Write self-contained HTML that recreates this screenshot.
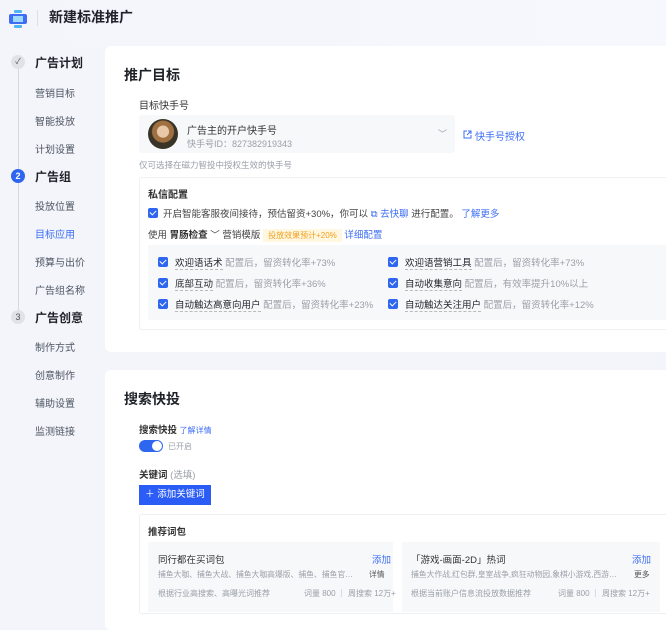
<!DOCTYPE html>
<html><head><meta charset="utf-8"><style>
*{margin:0;padding:0;box-sizing:border-box}
body{width:666px;height:606px;overflow:hidden;background:#f3f5fb;font-family:"Liberation Sans","Noto Sans CJK SC",sans-serif;color:#1f2329;position:relative}
.a{position:absolute;white-space:nowrap}
.g{color:#9aa0a8}
.b{color:#3d6ef5}
.cb{position:absolute;width:10px;height:10px;background:#2f66f0;border-radius:2px}
.cb:after{content:"";position:absolute;left:3px;top:1px;width:3px;height:5px;border:solid #fff;border-width:0 1.3px 1.3px 0;transform:rotate(45deg)}
.u{border-bottom:1px dashed #bbb}
.side{font-size:10px;color:#4e5561}
.st{font-size:12px;font-weight:bold;color:#1f2329}
.el{overflow:hidden;text-overflow:ellipsis}
</style></head><body>
<div class="a" style="left:0;top:0;width:666px;height:46px;background:linear-gradient(90deg,#f3f5fb,#f6f8fd);border-radius:12px 0 0 0"></div>
<svg class="a" style="left:7px;top:8px" width="22" height="22" viewBox="0 0 22 22"><rect x="7" y="2" width="8" height="3" rx="1" fill="#4fb6f5"/><rect x="2" y="6" width="18" height="10" rx="2" fill="#3d6ef5"/><rect x="6" y="8" width="10" height="6" fill="#9fd9fb"/><rect x="7" y="17" width="8" height="3" rx="1" fill="#4fb6f5"/></svg>
<div class="a" style="left:37px;top:10px;width:1px;height:16px;background:#dcdfe6"></div>
<div class="a" style="left:49px;top:7px;font-size:14px;font-weight:bold;color:#1f2329">新建标准推广</div>

<div class="a" style="left:18px;top:62px;width:1px;height:255px;background:#d5d9e0"></div>
<div class="a" style="left:11px;top:55px;width:14px;height:14px;border-radius:50%;background:#dfe2e8;font-size:8px;text-align:center;line-height:14px;color:#555">✓</div>
<div class="a st" style="left:35px;top:54px">广告计划</div>
<div class="a side" style="left:35px;top:85px">营销目标</div>
<div class="a side" style="left:35px;top:113px">智能投放</div>
<div class="a side" style="left:35px;top:141px">计划设置</div>
<div class="a" style="left:11px;top:169px;width:14px;height:14px;border-radius:50%;background:#2f66f0;font-size:9px;text-align:center;line-height:14px;color:#fff;font-weight:bold">2</div>
<div class="a st" style="left:35px;top:168px">广告组</div>
<div class="a side" style="left:35px;top:198px">投放位置</div>
<div class="a side" style="left:35px;top:226px;color:#3d6ef5">目标应用</div>
<div class="a side" style="left:35px;top:254px">预算与出价</div>
<div class="a side" style="left:35px;top:282px">广告组名称</div>
<div class="a" style="left:11px;top:310px;width:14px;height:14px;border-radius:50%;background:#dfe2e8;font-size:9px;text-align:center;line-height:14px;color:#555">3</div>
<div class="a st" style="left:35px;top:309px">广告创意</div>
<div class="a side" style="left:35px;top:339px">制作方式</div>
<div class="a side" style="left:35px;top:367px">创意制作</div>
<div class="a side" style="left:35px;top:395px">辅助设置</div>
<div class="a side" style="left:35px;top:423px">监测链接</div>

<div class="a" style="left:105px;top:46px;width:580px;height:306px;background:#fff;border-radius:6px"></div>
<div class="a" style="left:124px;top:65px;font-size:14px;font-weight:bold">推广目标</div>
<div class="a" style="left:139px;top:97px;font-size:10px;color:#333">目标快手号</div>
<div class="a" style="left:139px;top:115px;width:316px;height:38px;background:#f7f8fa;border-radius:3px"></div>
<div class="a" style="left:148px;top:119px;width:30px;height:30px;border-radius:50%;background:radial-gradient(circle at 50% 42%,#e8c8a8 0 25%,#a07040 28% 46%,#3a3428 50%)"></div>
<div class="a" style="left:187px;top:122px;font-size:10px;color:#333">广告主的开户快手号</div>
<div class="a g" style="left:187px;top:137px;font-size:9px">快手号ID：827382919343</div>
<div class="a g" style="left:438px;top:127px;font-size:9px">﹀</div>
<svg class="a" style="left:463px;top:130px" width="9" height="9" viewBox="0 0 9 9"><path d="M4 1H1v7h7V5M5 1h3v3M8 1L4 5" stroke="#3d6ef5" fill="none" stroke-width="1"/></svg>
<div class="a b" style="left:475px;top:128px;font-size:10px">快手号授权</div>
<div class="a g" style="left:139px;top:159px;font-size:8.5px">仅可选择在磁力智投中授权生效的快手号</div>

<div class="a" style="left:139px;top:177px;width:560px;height:153px;border:1px solid #eef0f3;border-radius:3px"></div>
<div class="a" style="left:148px;top:186px;font-size:10px;font-weight:bold;color:#333">私信配置</div>
<div class="cb" style="left:148px;top:208px"></div>
<div class="a" style="left:163px;top:206px;font-size:9.5px;color:#444">开启智能客服夜间接待，预估留资+30%，你可以 <span class="b">⧉ 去快聊</span> 进行配置。 <span class="b">了解更多</span></div>
<div class="a" style="left:148px;top:227px;font-size:9.5px;color:#444">使用 <b style="color:#333">胃肠检查</b> ﹀ 营销模版 <span style="background:#fff7e0;color:#f0a020;font-size:8px;padding:2px 5px">投放效果预计+20%</span> <span class="b">详细配置</span></div>
<div class="a" style="left:148px;top:245px;width:520px;height:75px;background:#f7f8fa"></div>
<div class="cb" style="left:158px;top:257px"></div><div class="a" style="left:175px;top:255px;font-size:9.5px"><span class="u">欢迎语话术</span> <span class="g">配置后，留资转化率+73%</span></div>
<div class="cb" style="left:158px;top:278px"></div><div class="a" style="left:175px;top:276px;font-size:9.5px"><span class="u">底部互动</span> <span class="g">配置后，留资转化率+36%</span></div>
<div class="cb" style="left:158px;top:299px"></div><div class="a" style="left:175px;top:297px;font-size:9.5px"><span class="u">自动触达高意向用户</span> <span class="g">配置后，留资转化率+23%</span></div>
<div class="cb" style="left:388px;top:257px"></div><div class="a" style="left:405px;top:255px;font-size:9.5px"><span class="u">欢迎语营销工具</span> <span class="g">配置后，留资转化率+73%</span></div>
<div class="cb" style="left:388px;top:278px"></div><div class="a" style="left:405px;top:276px;font-size:9.5px"><span class="u">自动收集意向</span> <span class="g">配置后，有效率提升10%以上</span></div>
<div class="cb" style="left:388px;top:299px"></div><div class="a" style="left:405px;top:297px;font-size:9.5px"><span class="u">自动触达关注用户</span> <span class="g">配置后，留资转化率+12%</span></div>

<div class="a" style="left:105px;top:370px;width:580px;height:260px;background:#fff;border-radius:6px"></div>
<div class="a" style="left:124px;top:389px;font-size:14px;font-weight:bold">搜索快投</div>
<div class="a" style="left:139px;top:422px;font-size:9.5px;font-weight:bold;color:#333">搜索快投 <span class="b" style="font-size:8px;font-weight:normal">了解详情</span></div>
<div class="a" style="left:139px;top:440px;width:24px;height:12px;border-radius:6px;background:#2f66f0"></div>
<div class="a" style="left:152px;top:441px;width:10px;height:10px;border-radius:50%;background:#fff"></div>
<div class="a g" style="left:168px;top:441px;font-size:8px">已开启</div>
<div class="a" style="left:139px;top:467px;font-size:9.5px;font-weight:bold;color:#333">关键词 <span class="g" style="font-weight:normal">(选填)</span></div>
<div class="a" style="left:139px;top:485px;width:72px;height:20px;background:#2b5cf6;color:#fff;font-size:9.5px;line-height:20px;text-align:center">＋ 添加关键词</div>
<div class="a" style="left:139px;top:514px;width:560px;height:100px;border:1px solid #eef0f3;border-radius:3px"></div>
<div class="a" style="left:148px;top:524px;font-size:9.5px;font-weight:bold;color:#333">推荐词包</div>
<div class="a" style="left:148px;top:542px;width:245px;height:70px;background:#f7f8fa"></div>
<div class="a" style="left:158px;top:552px;font-size:9.5px;color:#333">同行都在买词包</div>
<div class="a b" style="left:372px;top:552px;font-size:9.5px">添加</div>
<div class="a g el" style="left:158px;top:569px;width:200px;font-size:7.8px">捕鱼大咖、捕鱼大战、捕鱼大咖高爆版、捕鱼、捕鱼官方、快手小游戏</div>
<div class="a" style="left:369px;top:569px;font-size:7.8px;color:#555">详情</div>
<div class="a g" style="left:158px;top:588px;font-size:8px">根据行业高搜索、高曝光词推荐</div>
<div class="a g" style="left:304px;top:588px;font-size:8px">词量 800 ｜ 周搜索 12万+</div>
<div class="a" style="left:402px;top:542px;width:258px;height:70px;background:#f7f8fa"></div>
<div class="a" style="left:411px;top:552px;font-size:9.5px;color:#333">「游戏-画面-2D」热词</div>
<div class="a b" style="left:632px;top:552px;font-size:9.5px">添加</div>
<div class="a g el" style="left:411px;top:569px;width:208px;font-size:7.8px">捕鱼大作战,红包群,皇室战争,疯狂动物园,象棋小游戏,西游记,斗地主</div>
<div class="a" style="left:634px;top:569px;font-size:7.8px;color:#555">更多</div>
<div class="a g" style="left:411px;top:588px;font-size:8px">根据当前账户信息流投放数据推荐</div>
<div class="a g" style="left:558px;top:588px;font-size:8px">词量 800 ｜ 周搜索 12万+</div>
</body></html>
